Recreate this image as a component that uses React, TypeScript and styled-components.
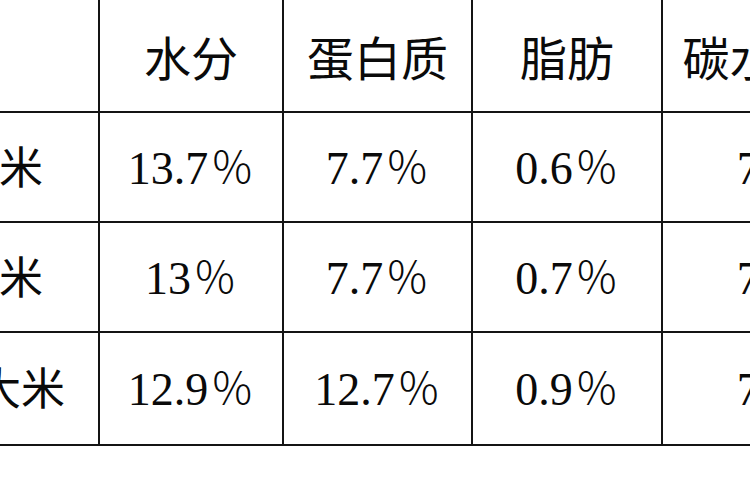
import React, { FC } from "react";
import styled, { createGlobalStyle } from "styled-components";

const GlobalStyle = createGlobalStyle`
  html, body {
    margin: 0;
    padding: 0;
    background: #ffffff;
  }
`;

interface IRow {
  name: string;
  values: string[];
}

const columns = [
  { title: "", width: 200 },
  { title: "水分", width: 184 },
  { title: "蛋白质", width: 189 },
  { title: "脂肪", width: 190 },
  { title: "碳水化合物", width: 276 },
];

const tableWidth = columns.reduce((sum, c) => sum + c.width, 0);

const rows: IRow[] = [
  { name: "小米", values: ["13.7", "7.7", "0.6", "76.8"] },
  { name: "玉米", values: ["13", "7.7", "0.7", "77.2"] },
  { name: "糙大米", values: ["12.9", "12.7", "0.9", "72.8"] },
];

const Page = styled.div`
  width: 750px;
  height: 500px;
  overflow: hidden;
  background: #ffffff;
`;

const Sheet = styled.table<{ $width: number }>`
  width: ${(p) => p.$width}px;
  margin-left: -102px;
  margin-top: -2px;
  border-collapse: collapse;
  table-layout: fixed;
  font-family: "Liberation Serif", "Noto Sans CJK SC", serif;
  color: #0a0a0a;
`;

const Col = styled.col<{ $width: number }>`
  width: ${(p) => p.$width}px;
`;

const TR = styled.tr``;

const TH = styled.th<{ $height: number }>`
  height: ${(p) => p.$height}px;
  padding: 0;
  border: 2px solid #141414;
  font-family: "Noto Sans CJK SC", sans-serif;
  font-size: 47px;
  font-weight: 400;
  text-align: center;
  vertical-align: middle;
  white-space: nowrap;
  overflow: hidden;
`;

const TD = styled.td<{ $height: number }>`
  height: ${(p) => p.$height}px;
  padding: 0;
  border: 2px solid #141414;
  font-size: 46px;
  line-height: 1;
  text-align: center;
  vertical-align: middle;
  white-space: nowrap;
`;

const Label = styled.span`
  font-family: "Noto Sans CJK SC", sans-serif;
  font-size: 44px;
`;

const Percent = styled.span`
  font-family: "Noto Sans CJK SC", sans-serif;
  font-size: 44px;
  font-weight: 300;
  margin-left: 2px;
`;

const rowHeights = [108, 108, 111];

const App: FC = () => {
  return (
    <Page>
      <GlobalStyle />
      <Sheet $width={tableWidth}>
        <colgroup>
          {columns.map((c, i) => (
            <Col key={`col-${String(i)}`} $width={c.width} />
          ))}
        </colgroup>
        <thead>
          <TR>
            {columns.map((c, i) => (
              <TH key={`head-${String(i)}`} $height={111}>
                {c.title}
              </TH>
            ))}
          </TR>
        </thead>
        <tbody>
          {rows.map((row, idx) => (
            <TR key={`row-${row.name}`}>
              <TD $height={rowHeights[idx]}>
                <Label>{row.name}</Label>
              </TD>
              {row.values.map((v, i) => (
                <TD key={`val-${String(i)}`} $height={rowHeights[idx]}>
                  {v}
                  <Percent>％</Percent>
                </TD>
              ))}
            </TR>
          ))}
        </tbody>
      </Sheet>
    </Page>
  );
};

export default App;
